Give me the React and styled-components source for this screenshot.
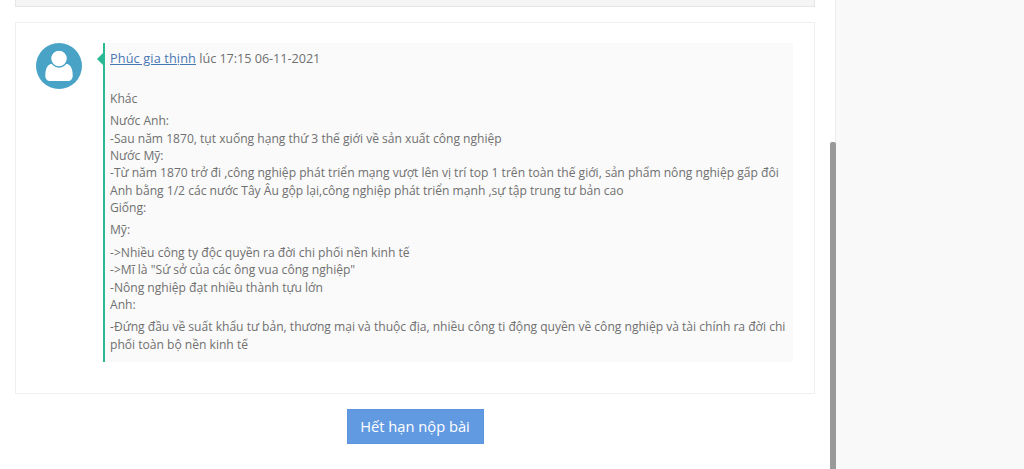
import React from "react";
import styled, { createGlobalStyle } from "styled-components";

const GlobalStyle = createGlobalStyle`
  * {
    box-sizing: border-box;
  }
  body {
    margin: 0;
    overflow: hidden;
    background: #f9f9f9;
    font-family: "Open Sans", "Noto Sans", sans-serif;
    color: #707070;
  }
`;

const Page = styled.div`
  display: flex;
  height: 469px;
  overflow: hidden;
`;

const Content = styled.main`
  width: 830px;
  padding: 0 15px;
  background: #fff;
  display: flex;
  flex-direction: column;
  align-items: center;
`;

const Question = styled.div`
  width: 800px;
  height: 7px;
  background: #f5f5f5;
  border: 1px solid #e6e6e6;
  border-top: 0;
`;

const Card = styled.section`
  width: 800px;
  height: 372px;
  margin-top: 15px;
  padding: 20px 21px 0 20px;
  border: 1px solid #efefef;
  display: flex;
  align-items: flex-start;
`;

const Avatar = styled.svg`
  width: 46px;
  height: 46px;
  margin-right: 20.5px;
  flex: none;
`;

const Comment = styled.article`
  position: relative;
  width: 690.5px;
  height: 319px;
  padding: 7px 0 0 5.5px;
  border-left: 2px solid #2bb995;
  background: #fafafa;
  white-space: nowrap;
`;

const Arrow = styled.span`
  position: absolute;
  left: -8px;
  top: 9px;
  border: 7px solid transparent;
  border-left: 0;
  border-right-color: #2bb995;
`;

const Meta = styled.div`
  margin-bottom: 22.7px;
  font-size: 12.7px;
  line-height: 17.3px;
  letter-spacing: -0.06px;
`;

const Author = styled.a`
  color: #4a78b5;
  letter-spacing: 0.14px;
  text-decoration: underline;
`;

const Text = styled.p`
  margin: 0 0 5.2px;
  font-size: 12.1px;
  line-height: 17.3px;
  letter-spacing: -0.01px;
`;

const Button = styled.button`
  width: 137px;
  height: 35px;
  margin-top: 15px;
  padding: 0 0 2px;
  border: 1px solid #5c95df;
  background: #629ae2;
  color: #fff;
  font-family: inherit;
  font-size: 14.7px;
`;

const Track = styled.div`
  width: 6px;
  padding-top: 142px;
  background: #fff;
  border-right: 1px solid #eee;
`;

const Thumb = styled.div`
  width: 6px;
  height: 340px;
  border-radius: 2px 2px 0 0;
  background: #999;
`;

const paragraphs = [
  ["Khác"],
  [
    "Nước Anh:",
    "-Sau năm 1870, tụt xuống hạng thứ 3 thế giới về sản xuất công nghiệp",
    "Nước Mỹ:",
    "-Từ năm 1870 trở đi ,công nghiệp phát triển mạng vượt lên vị trí top 1 trên toàn thế giới, sản phẩm nông nghiệp gấp đôi",
    "Anh bằng 1/2 các nước Tây Âu gộp lại,công nghiệp phát triển mạnh ,sự tập trung tư bản cao",
    "Giống:",
  ],
  ["Mỹ:"],
  [
    "->Nhiều công ty độc quyền ra đời chi phối nền kinh tế",
    '->Mĩ là "Sứ sở của các ông vua công nghiệp"',
    "-Nông nghiệp đạt nhiều thành tựu lớn",
    "Anh:",
  ],
  [
    "-Đứng đầu về suất khẩu tư bản, thương mại và thuộc địa, nhiều công ti động quyền về công nghiệp và tài chính ra đời chi",
    "phối toàn bộ nền kinh tế",
  ],
];

const App = () => {
  return (
    <>
      <GlobalStyle />
      <Page>
        <Content>
          <Question />
          <Card>
            <Avatar viewBox="0 0 46 46">
              <circle cx="23" cy="23" r="23" fill="#48a3c6" />
              <path
                d="M15.5 20.8C11.5 21.5 9.3 26 9.3 32.5C9.3 36 11 38 14.5 38H31.5C35 38 36.7 36 36.7 32.5C36.7 26 34.5 21.5 30.5 20.8Z"
                fill="#fff"
              />
              <circle
                cx="23"
                cy="15.6"
                r="8.4"
                fill="#fff"
                stroke="#48a3c6"
                strokeWidth="1.3"
              />
            </Avatar>
            <Comment>
              <Arrow />
              <Meta>
                <Author>Phúc gia thịnh</Author> lúc 17:15 06-11-2021
              </Meta>
              {paragraphs.map((lines, i) => (
                <Text key={i}>
                  {lines.map((line, j) => (
                    <React.Fragment key={j}>
                      {j > 0 && <br />}
                      {line}
                    </React.Fragment>
                  ))}
                </Text>
              ))}
            </Comment>
          </Card>
          <Button>Hết hạn nộp bài</Button>
        </Content>
        <Track>
          <Thumb />
        </Track>
      </Page>
    </>
  );
};

export default App;
